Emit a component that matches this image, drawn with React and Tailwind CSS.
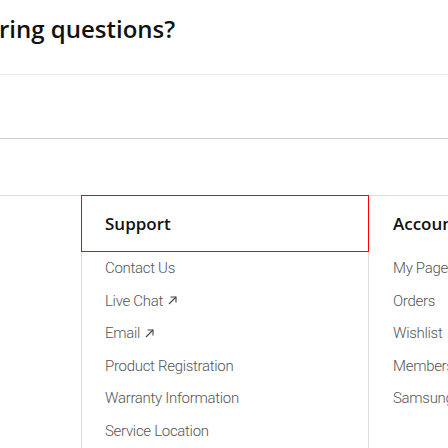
// Footer-style support menu, cropped view

const body = { fontFamily: 'Roboto, "Liberation Sans", sans-serif' }
const head = { fontFamily: '"Open Sans", "Liberation Sans", sans-serif' }

function Arrow() {
  return (
    <svg width="9" height="9" viewBox="0 0 9 9" className="ml-[5px] shrink-0" fill="none" stroke="#444" strokeWidth="1.1">
      <path d="M1 8L8 1" />
      <path d="M2.5 1H8V6.5" />
    </svg>
  )
}

function Item({ label, ext }) {
  return (
    <div className="h-[32.6px] flex items-center whitespace-nowrap text-[15px] font-light tracking-[-0.3px] text-[#555]" style={body}>
      {label}
      {ext && <Arrow />}
    </div>
  )
}

const support = [
  { label: 'Contact Us' },
  { label: 'Live Chat', ext: true },
  { label: 'Email', ext: true },
  { label: 'Product Registration' },
  { label: 'Warranty Information' },
  { label: 'Service Location' },
]

const account = ['My Page', 'Orders', 'Wishlist', 'Membership', 'Samsung Rewards']

export default function App() {
  return (
    <div className="w-[448px] h-[448px] overflow-hidden bg-white">
      <div className="h-[74px] pt-[14px]">
        <div className="text-[24px] font-semibold text-[#111] leading-[30px] whitespace-nowrap -ml-[1px]" style={head}>
          ring questions?
        </div>
      </div>
      <div className="h-[65px] border-t border-b border-t-[#e8e8e8] border-b-[#cccccc]" />
      <div className="h-[56px]" />
      <div className="flex w-[900px] -ml-[206px]">
        <div className="w-[287px] shrink-0 border-t border-l border-[#dddddd]" />
        <div className="w-[287px] shrink-0 border-t border-l border-[#dddddd] h-[260px]">
          <div className="relative z-10 -mt-px -ml-px w-[288px] h-[57px] border border-[#ff0000] flex items-center pl-[23px]">
            <span className="text-[17px] font-semibold text-[#111]" style={head}>Support</span>
          </div>
          <div className="pl-[23px]">
            {support.map((s) => (
              <Item key={s.label} label={s.label} ext={s.ext} />
            ))}
          </div>
        </div>
        <div className="w-[287px] shrink-0 border-t border-l border-[#dddddd] h-[260px]">
          <div className="h-[56px] flex items-center pl-[24px]">
            <span className="text-[17px] font-semibold text-[#111] whitespace-nowrap" style={head}>Account</span>
          </div>
          <div className="pl-[24px]">
            {account.map((a) => (
              <Item key={a} label={a} />
            ))}
          </div>
        </div>
      </div>
    </div>
  )
}
